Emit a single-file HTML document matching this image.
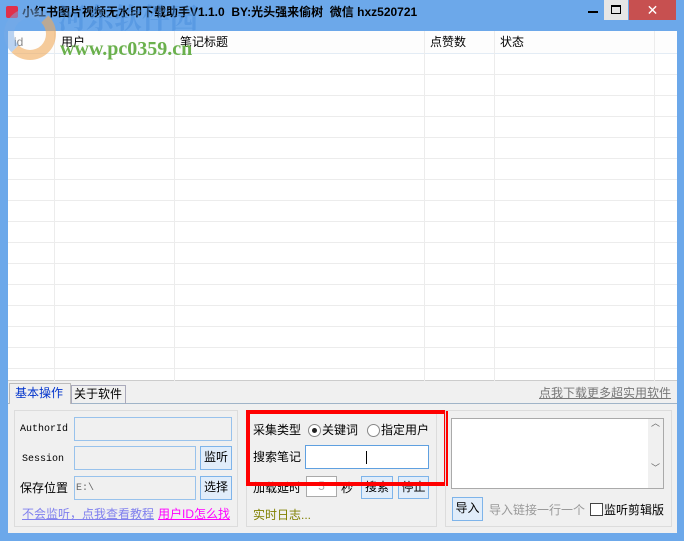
<!DOCTYPE html>
<html><head><meta charset="utf-8"><style>
*{margin:0;padding:0;box-sizing:border-box}
body{width:684px;height:541px;background:#6ca8ea;position:relative;overflow:hidden;font-family:"Liberation Sans","Noto Sans CJK SC",sans-serif;font-size:12px;color:#000;line-height:1.15}
.a{position:absolute;white-space:nowrap}
.title{left:22px;top:6px;font-size:12px;font-weight:bold;color:#000}
.list{left:8px;top:31px;width:669px;height:350px;background:#fff;
background-image:repeating-linear-gradient(to bottom,transparent 0,transparent 20px,#ececec 20px,#ececec 21px);background-position:0 23px;border-bottom:1px solid #ccc}
.hdr{left:8px;top:31px;width:669px;height:23px;background:#fdfdfd;border-bottom:1px solid #e3ecf5}
.vl{width:1px;background:#ececec;top:31px;height:350px}
.h{top:36px;font-size:12px}
.panel{left:8px;top:381px;width:669px;height:152px;background:#f0f0f0}
.box{border:1px solid #dcdcdc}
.in{background:#f0f0f0;border:1px solid #98c2ec}
.btn{background:#e1edfa;border:1px solid #7eb4ea;text-align:center;font-size:12px;padding-top:4px}
.lab{font-size:12px}
.mono{font-family:"Liberation Mono",monospace;font-size:10px}
</style></head><body>
<div class="a" style="left:0;top:0;width:684px;height:31px;background:#6ca8ea"></div>
<div class="a" style="left:6px;top:6px;width:12px;height:12px;background:#e0304a;border-radius:2px"></div>
<div class="a title">小红书图片视频无水印下载助手V1.1.0&nbsp; BY:光头强来偷树&nbsp; 微信 hxz520721</div>
<div class="a" style="left:588px;top:11px;width:10px;height:2px;background:#000"></div>
<div class="a" style="left:604px;top:0;width:24px;height:20px;background:#e6e6e6"></div>
<div class="a" style="left:611px;top:5px;width:10px;height:9px;border:1px solid #000;border-top-width:2px"></div>
<div class="a" style="left:629px;top:0;width:47px;height:20px;background:#c75050;color:#fff;text-align:center;font-size:14px;line-height:20px">✕</div>
<div class="a list"></div>
<div class="a hdr"></div>
<div class="a vl" style="left:54px"></div>
<div class="a vl" style="left:174px"></div>
<div class="a vl" style="left:424px"></div>
<div class="a vl" style="left:494px"></div>
<div class="a vl" style="left:654px"></div>
<div class="a h" style="left:14px;color:#888">id</div>
<div class="a h" style="left:61px">用户</div>
<div class="a h" style="left:180px">笔记标题</div>
<div class="a h" style="left:430px">点赞数</div>
<div class="a h" style="left:500px">状态</div>
<div class="a" style="left:4px;top:8px;width:52px;height:52px;border-radius:50%;border:10px solid rgba(120,170,230,.5);border-right-color:rgba(240,170,90,.6);border-bottom-color:rgba(240,170,90,.6)"></div>
<div class="a" style="left:58px;top:3px;font-size:28px;font-weight:bold;color:rgba(70,140,220,.5);font-family:'Noto Serif CJK SC',serif;line-height:1">河东软件园</div>
<div class="a" style="left:60px;top:39px;font-size:20px;font-weight:bold;color:#6ab04c;font-family:'Liberation Serif',serif;line-height:1">www.pc0359.cn</div>
<div class="a panel"></div>
<div class="a" style="left:8px;top:403px;width:669px;height:1px;background:#a0b4c8"></div>
<div class="a" style="left:9px;top:383px;width:62px;height:21px;background:#f0f0f0;border:1px solid #bbb;border-bottom:none;color:#0033cc;font-size:12px;padding:3px 5px">基本操作</div>
<div class="a" style="left:71px;top:385px;width:55px;height:19px;border:1px solid #aab;border-bottom:none;font-size:12px;padding:2px 2px">关于软件</div>
<div class="a" style="left:539px;top:387px;color:#777;text-decoration:underline;font-size:12px">点我下载更多超实用软件</div>
<div class="a box" style="left:14px;top:410px;width:224px;height:117px"></div>
<div class="a mono" style="left:20px;top:424px">AuthorId</div>
<div class="a in" style="left:74px;top:417px;width:158px;height:24px"></div>
<div class="a mono" style="left:22px;top:454px">Session</div>
<div class="a in" style="left:74px;top:446px;width:122px;height:24px"></div>
<div class="a btn" style="left:200px;top:446px;width:32px;height:24px">监听</div>
<div class="a lab" style="left:20px;top:482px">保存位置</div>
<div class="a in mono" style="left:74px;top:476px;width:122px;height:24px;color:#666;padding:6px 1px">E:\</div>
<div class="a btn" style="left:200px;top:476px;width:32px;height:24px">选择</div>
<div class="a" style="left:22px;top:508px;color:#8080ee;text-decoration:underline">不会监听，点我查看教程</div>
<div class="a" style="left:158px;top:508px;color:#f0f;text-decoration:underline">用户ID怎么找</div>
<div class="a box" style="left:246px;top:410px;width:191px;height:117px"></div>
<div class="a lab" style="left:253px;top:424px">采集类型</div>
<div class="a" style="left:308px;top:424px;width:13px;height:13px;border:1px solid #888;border-radius:50%;background:#fff"></div>
<div class="a" style="left:312px;top:428px;width:5px;height:5px;border-radius:50%;background:#222"></div>
<div class="a lab" style="left:322px;top:424px">关键词</div>
<div class="a" style="left:367px;top:424px;width:13px;height:13px;border:1px solid #888;border-radius:50%;background:#fff"></div>
<div class="a lab" style="left:381px;top:424px">指定用户</div>
<div class="a lab" style="left:253px;top:451px">搜索笔记</div>
<div class="a" style="left:305px;top:445px;width:124px;height:24px;background:#fff;border:1px solid #5fa0e0"></div>
<div class="a" style="left:366px;top:451px;width:1px;height:13px;background:#000"></div>
<div class="a lab" style="left:253px;top:482px">加载延时</div>
<div class="a" style="left:306px;top:476px;width:31px;height:21px;background:#fff;border:1px solid #aaa;color:#aaa;text-align:center;padding-top:3px">5</div>
<div class="a lab" style="left:341px;top:482px">秒</div>
<div class="a btn" style="left:361px;top:476px;width:32px;height:23px">搜索</div>
<div class="a btn" style="left:398px;top:476px;width:31px;height:23px">停止</div>
<div class="a lab" style="left:253px;top:509px;color:#808000">实时日志...</div>
<div class="a" style="left:246px;top:410px;width:202px;height:76px;border:4px solid #f00"></div>
<div class="a box" style="left:445px;top:410px;width:227px;height:117px"></div>
<div class="a" style="left:451px;top:418px;width:213px;height:71px;background:#fff;border:1px solid #aaa"></div>
<div class="a" style="left:648px;top:419px;width:15px;height:69px;background:#f0f0f0;color:#666;font-size:9px;text-align:center;line-height:1">︿<br><br><br><br><br>﹀</div>
<div class="a btn" style="left:452px;top:497px;width:31px;height:24px">导入</div>
<div class="a lab" style="left:489px;top:504px;color:#999">导入链接一行一个</div>
<div class="a" style="left:590px;top:503px;width:13px;height:13px;border:1px solid #444;background:#fff"></div>
<div class="a lab" style="left:604px;top:504px">监听剪辑版</div>
</body></html>
